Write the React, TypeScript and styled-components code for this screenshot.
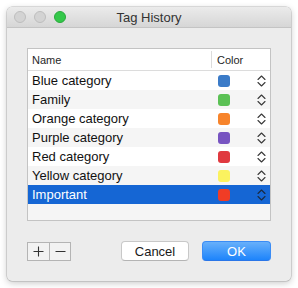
import React from 'react';
import { styled, createGlobalStyle } from 'styled-components';

const GlobalStyle = createGlobalStyle`
  html, body {
    margin: 0;
    padding: 0;
    background: #ffffff;
  }
  body {
    font-family: "Liberation Sans", Arial, sans-serif;
  }
`;

const Page = styled.div`
  width: 298px;
  height: 288px;
  padding: 7px;
  box-sizing: border-box;
`;

const Window = styled.div`
  width: 284px;
  height: 274px;
  background: #ececec;
  border-radius: 5px;
  box-shadow: 0 0 0 0.5px rgba(0, 0, 0, 0.22), 0 2px 7px rgba(0, 0, 0, 0.22);
  display: flex;
  flex-direction: column;
  overflow: hidden;
`;

const TitleBar = styled.div`
  height: 20px;
  flex: none;
  display: flex;
  align-items: center;
  padding-left: 7px;
  background: linear-gradient(#ebebeb, #d6d6d6);
  border-bottom: 1px solid #c4c4c4;
  position: relative;
`;

const Lights = styled.div`
  display: flex;
  gap: 8px;
`;

const Light = styled.span<{ $color: string; $edge: string }>`
  width: 12px;
  height: 12px;
  border-radius: 50%;
  box-sizing: border-box;
  background: ${(p) => p.$color};
  border: 0.5px solid ${(p) => p.$edge};
`;

const Title = styled.div`
  position: absolute;
  left: 0;
  right: 0;
  top: 0;
  bottom: 0;
  display: flex;
  align-items: center;
  justify-content: center;
  font-size: 13px;
  color: #333333;
  pointer-events: none;
`;

const Body = styled.div`
  flex: 1;
  padding: 20px 20px 20px;
  display: flex;
  flex-direction: column;
`;

const Table = styled.div`
  height: 173px;
  border: 1px solid #c3c3c3;
  background: #f5f5f5;
  box-sizing: border-box;
  display: flex;
  flex-direction: column;
  overflow: hidden;
`;

const Header = styled.div`
  height: 22px;
  flex: none;
  display: grid;
  grid-template-columns: 183px 1fr;
  background: #ffffff;
  border-bottom: 1px solid #dcdcdc;
  box-sizing: border-box;
  font-size: 11px;
  color: #262626;
`;

const HeadCell = styled.div<{ $divider?: boolean }>`
  display: flex;
  align-items: center;
  padding-left: ${(p) => (p.$divider ? '5px' : '4px')};
  margin: 2px 0;
  border-left: ${(p) => (p.$divider ? '1px solid #dcdcdc' : 'none')};
`;

const Row = styled.div<{ $stripe: boolean; $selected: boolean }>`
  height: 19px;
  flex: none;
  display: grid;
  grid-template-columns: 190px 12px 1fr;
  align-items: center;
  font-size: 13px;
  background: ${(p) => (p.$selected ? '#1566d4' : p.$stripe ? '#f5f5f5' : '#ffffff')};
  color: ${(p) => (p.$selected ? '#ffffff' : '#111111')};
`;

const Name = styled.span`
  padding-left: 4px;
  white-space: nowrap;
`;

const Swatch = styled.span<{ $color: string }>`
  width: 12px;
  height: 12px;
  border-radius: 3px;
  background: ${(p) => p.$color};
`;

const Stepper = styled.span`
  display: flex;
  justify-content: flex-end;
  padding-right: 4px;
`;

const Footer = styled.div`
  margin-top: 20px;
  display: flex;
  align-items: center;
`;

const Segmented = styled.div`
  display: flex;
  height: 19px;
  border: 1px solid #b4b4b4;
  box-sizing: border-box;
  background: #f2f2f2;
`;

const SegButton = styled.button<{ $first?: boolean }>`
  width: 21px;
  height: 100%;
  padding: 0;
  border: none;
  border-left: ${(p) => (p.$first ? 'none' : '1px solid #b4b4b4')};
  background: transparent;
  display: flex;
  align-items: center;
  justify-content: center;
`;

const Actions = styled.div`
  margin-left: auto;
  display: flex;
  gap: 13px;
`;

const PushButton = styled.button<{ $primary?: boolean }>`
  width: ${(p) => (p.$primary ? '69px' : '68px')};
  height: 20px;
  padding: 0;
  border-radius: 4px;
  font-family: "Liberation Sans", Arial, sans-serif;
  font-size: 13px;
  box-sizing: border-box;
  border: ${(p) => (p.$primary ? '1px solid #3a8cf5' : '1px solid #c8c8c8')};
  border-bottom-color: ${(p) => (p.$primary ? '#2a76e8' : '#b4b4b4')};
  background: ${(p) => (p.$primary ? 'linear-gradient(#68b0fa, #1d84fb)' : '#ffffff')};
  color: ${(p) => (p.$primary ? '#ffffff' : '#1a1a1a')};
`;

const tags = [
  { name: 'Blue category', color: '#3b7bc8' },
  { name: 'Family', color: '#5bc155' },
  { name: 'Orange category', color: '#f7842b' },
  { name: 'Purple category', color: '#7754c1' },
  { name: 'Red category', color: '#e0393f' },
  { name: 'Yellow category', color: '#fbf25f' },
  { name: 'Important', color: '#f03c25' },
];

const Chevrons = ({ color }: { color: string }) => (
  <svg width="9" height="14" viewBox="0 0 9 14" fill="none">
    <path d="M1 5.5 L4.5 2 L8 5.5" stroke={color} strokeWidth="1.1" strokeLinecap="round" strokeLinejoin="round" />
    <path d="M1 8.5 L4.5 12 L8 8.5" stroke={color} strokeWidth="1.1" strokeLinecap="round" strokeLinejoin="round" />
  </svg>
);

const App = () => {
  const selected = 6;
  return (
    <>
      <GlobalStyle />
      <Page>
        <Window>
          <TitleBar>
            <Lights>
              <Light $color="#d3d3d3" $edge="#bdbdbd" />
              <Light $color="#d3d3d3" $edge="#bdbdbd" />
              <Light $color="#34c84a" $edge="#2aa83d" />
            </Lights>
            <Title>Tag History</Title>
          </TitleBar>
          <Body>
            <Table>
              <Header>
                <HeadCell>Name</HeadCell>
                <HeadCell $divider>Color</HeadCell>
              </Header>
              {tags.map((t, i) => (
                <Row key={t.name} $stripe={i % 2 === 1} $selected={i === selected}>
                  <Name>{t.name}</Name>
                  <Swatch $color={t.color} />
                  <Stepper>
                    <Chevrons color={i === selected ? '#1b2a40' : '#3a3a3a'} />
                  </Stepper>
                </Row>
              ))}
            </Table>
            <Footer>
              <Segmented>
                <SegButton $first>
                  <svg width="11" height="11" viewBox="0 0 11 11">
                    <path d="M5.5 0.5 V10.5 M0.5 5.5 H10.5" stroke="#333" strokeWidth="1.1" />
                  </svg>
                </SegButton>
                <SegButton>
                  <svg width="11" height="11" viewBox="0 0 11 11">
                    <path d="M0.5 5.5 H10.5" stroke="#333" strokeWidth="1.1" />
                  </svg>
                </SegButton>
              </Segmented>
              <Actions>
                <PushButton>Cancel</PushButton>
                <PushButton $primary>OK</PushButton>
              </Actions>
            </Footer>
          </Body>
        </Window>
      </Page>
    </>
  );
};

export default App;
